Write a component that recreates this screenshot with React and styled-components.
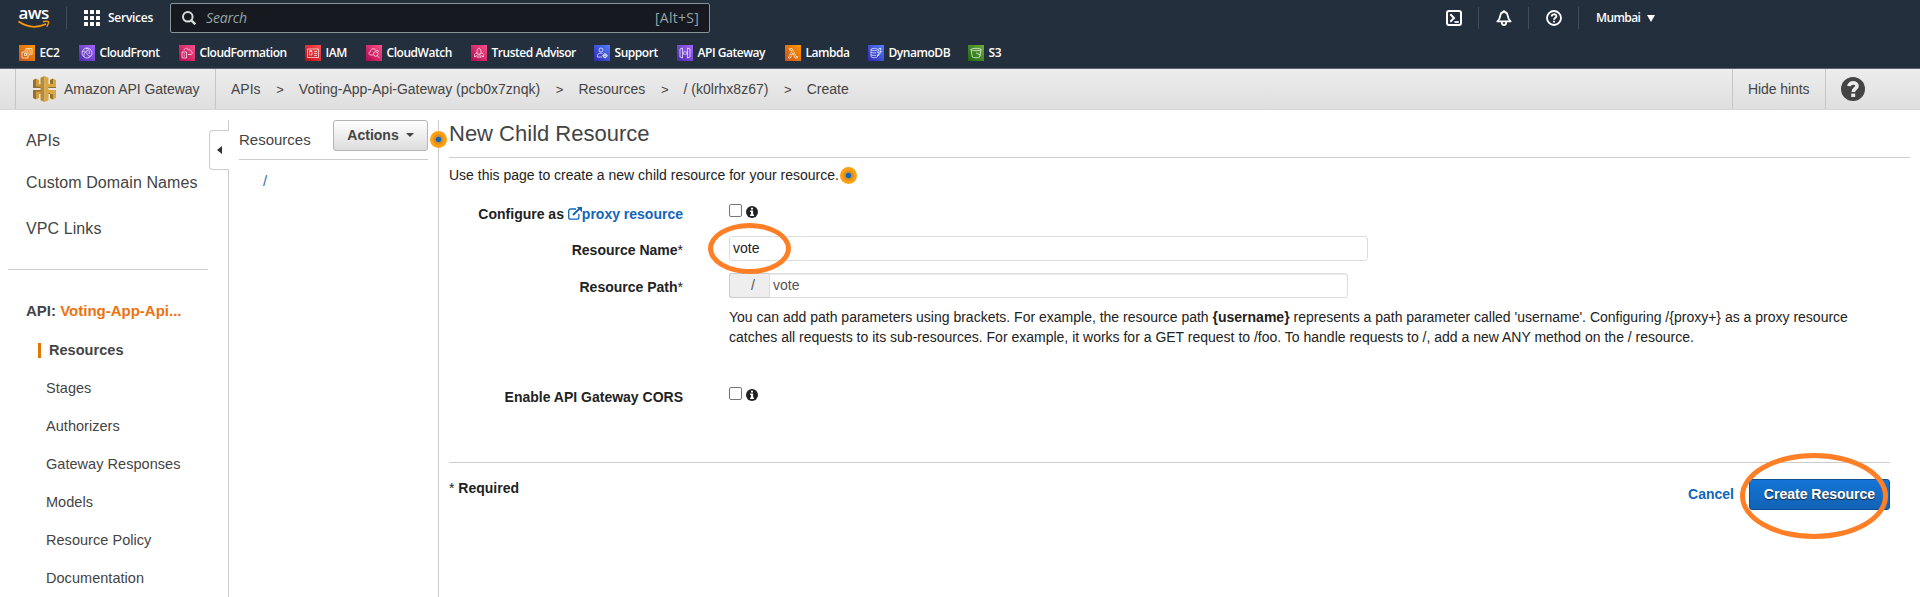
import React from 'react';
import styled, { createGlobalStyle, css } from 'styled-components';

const GlobalStyle = createGlobalStyle`
  * { box-sizing: border-box; }
  body {
    margin: 0;
    background: #fff;
    color: #222;
    font: 14px/20px "Liberation Sans", Arial, sans-serif;
    overflow: hidden;
  }
`;

const Page = styled.div`
  display: flex;
  flex-direction: column;
  height: 597px;
`;

/* ---------- Global navigation ---------- */

const Header = styled.header`
  height: 69px;
  flex: none;
  background: #242f3e;
  border-bottom: 1px solid #5a6471;
  color: #fff;
  font-family: "Open Sans", sans-serif;
  font-weight: 600;
  font-size: 12px;
`;

const TopBar = styled.div`
  display: flex;
  align-items: center;
  height: 36px;
`;

const Divider = styled.span`
  width: 1px;
  height: 22px;
  background: #414d5c;
`;

const Logo = styled.div`
  width: 66px;
  height: 36px;
  padding-left: 18px;
`;

const ServicesButton = styled.div`
  display: flex;
  align-items: center;
  gap: 8px;
  width: 103px;
  padding-left: 17px;
  letter-spacing: -0.27px;
`;

const SearchBox = styled.div`
  display: flex;
  align-items: center;
  width: 540px;
  height: 30px;
  padding: 0 10px 0 11px;
  border: 1px solid #879596;
  border-radius: 2px;
  background: #16191f;
  color: #95a5a6;
  font-weight: 400;
  font-size: 14px;

  em { flex: 1; margin-left: 10px; letter-spacing: -0.15px; }
  span { letter-spacing: 0.25px; }
`;

const Tools = styled.div`
  display: flex;
  align-items: center;
  margin-left: 736px;
`;

const Tool = styled.span`
  display: flex;
  justify-content: center;
  width: 49px;

  &:first-child { width: 32px; justify-content: flex-start; }
`;

const Region = styled.span`
  display: flex;
  align-items: center;
  gap: 7px;
  padding-left: 17px;
  letter-spacing: -0.6px;
`;

const Favorites = styled.nav`
  display: flex;
  height: 32px;
  padding: 9px 0 0 19px;
`;

const Favorite = styled.a`
  display: flex;
  gap: 4.5px;
  width: ${(p) => p.$width}px;
  line-height: 16px;
  letter-spacing: -0.46px;
  white-space: nowrap;
`;

/* ---------- Breadcrumb bar ---------- */

const SubHeader = styled.div`
  display: flex;
  flex: none;
  align-items: stretch;
  height: 41px;
  padding-left: 15px;
  border-bottom: 1px solid #d5d5d5;
  background: linear-gradient(#ededed, #dfdfdf);
  color: #444;
  line-height: 40px;
`;

const Brand = styled.div`
  display: flex;
  align-items: center;
  gap: 8px;
  width: 201px;
  padding-left: 17px;
  border: solid #c6c6c6;
  border-width: 0 1px;
  letter-spacing: -0.04px;
`;

const Crumbs = styled.div`
  display: flex;
  flex: 1;
  padding-left: 15px;
`;

const Crumb = styled.span`
  &:not(:last-child)::after {
    content: ">";
    margin: 0 15px 0 15.7px;
    font-size: 13px;
  }
`;

const HintToggle = styled.div`
  width: 94px;
  padding-left: 15px;
  border: solid #c6c6c6;
  border-width: 0 1px;
  letter-spacing: -0.08px;
`;

const HelpSlot = styled.div`
  display: flex;
  align-items: center;
  width: 94px;
  padding-left: 15px;
`;

/* ---------- Columns ---------- */

const Body = styled.div`
  display: flex;
  flex: 1;
  min-height: 0;
`;

const SideNav = styled.nav`
  position: relative;
  width: 229px;
  margin-top: 10px;
  padding-top: 11px;
  border-right: 1px solid #ccc;
  color: #444;
`;

const CollapseTab = styled.div`
  position: absolute;
  top: 10px;
  right: -1px;
  display: flex;
  align-items: center;
  justify-content: center;
  width: 20px;
  height: 40px;
  border: 1px solid #ccc;
  border-right: 0;
  border-radius: 4px 0 0 4px;
  background: #fff;
`;

const SideLink = styled.a`
  display: block;
  height: ${(p) => p.$height}px;
  padding-left: 26px;
  font-size: 16px;
  letter-spacing: 0.09px;
`;

const SideRule = styled.div`
  width: 200px;
  margin: 0 0 31px 8px;
  border-top: 1px solid #ccc;
`;

const ApiTitle = styled.div`
  height: 42px;
  padding-left: 26px;
  font-size: 15px;
  font-weight: 700;

  span { color: #ec7211; }
`;

const SubLink = styled.a`
  display: block;
  height: 15px;
  margin: 0 0 23px 38px;
  padding-left: 8px;
  font-size: 14.5px;
  line-height: 15px;
  letter-spacing: 0.04px;
  ${(p) => p.$active && css`
    border-left: 3px solid #e07700;
    font-weight: 700;
  `}
`;

const TreePane = styled.section`
  position: relative;
  width: 210px;
  margin-top: 10px;
  padding: 0 10px;
  border-right: 1px solid #ccc;
  color: #444;
`;

const TreeHead = styled.div`
  display: flex;
  justify-content: space-between;
  height: 40px;
  border-bottom: 1px solid #ccc;
  font-size: 15px;
  line-height: 39px;
`;

const ActionsButton = styled.button`
  display: flex;
  align-items: center;
  justify-content: center;
  gap: 7px;
  width: 95px;
  height: 31px;
  padding: 0 0 1px;
  border: 1px solid #b4b4b4;
  border-radius: 3px;
  background: linear-gradient(#fff, #dcdcdc);
  color: #444;
  font: 700 14px "Liberation Sans", Arial, sans-serif;
`;

const TreeRoot = styled.a`
  display: block;
  padding: 11px 0 0 24px;
  color: #3f6d9e;
  font-size: 15px;
`;

const HintDot = styled.span`
  display: inline-block;
  width: 17px;
  height: 17px;
  border-radius: 50%;
  background: radial-gradient(circle, #1166bb 0 2.4px, #dd8f1c 3.2px 4.8px, #ff9f14 5.6px);
  ${(p) => p.$floating && css`
    position: absolute;
    top: 11px;
    right: -9px;
  `}
`;

const Main = styled.main`
  flex: 1;
  padding: 11px 10px 0;
`;

const Title = styled.h1`
  margin: 0 0 7px;
  padding-bottom: 11px;
  border-bottom: 1px solid #ccc;
  color: #444;
  font-size: 22px;
  font-weight: 400;
  line-height: 25px;
`;

const Intro = styled.p`
  display: flex;
  align-items: center;
  gap: 1px;
  height: 20px;
  margin: 0 0 19px;
`;

const FormRow = styled.div`
  display: grid;
  grid-template-columns: 234px 1fr;
  column-gap: 46px;
  min-height: ${(p) => p.$height}px;
`;

const Label = styled.label`
  padding-top: ${(p) => (p.$field ? 4 : 0)}px;
  font-weight: 700;
  text-align: right;
  white-space: nowrap;

  span { font-weight: 400; }
  a { color: #1166bb; }
  svg { vertical-align: -1px; }
`;

const CheckGroup = styled.div`
  display: flex;
  align-items: flex-start;
  gap: 4px;

  svg { margin-top: 2px; }
`;

const Checkbox = styled.input`
  appearance: none;
  width: 13px;
  height: 13px;
  margin: 0;
  border: 1px solid #767676;
  border-radius: 2px;
  background: #fff;
`;

const NameInput = styled.div`
  position: relative;
  width: 639px;
  height: 25px;
  padding-left: 3px;
  border: 1px solid #ddd;
  border-radius: 3px;
  line-height: 22px;
`;

const PathInput = styled.div`
  display: flex;
  width: 619px;
  height: 25px;
  border: 1px solid #ddd;
  border-radius: 3px;
  box-shadow: inset 0 1px 1px #e8e8e8;
  color: #555;
  line-height: 22px;
`;

const PathPrefix = styled.span`
  width: 41px;
  height: 25px;
  margin: -1px 3px 0 -1px;
  padding: 1px 0 0 21px;
  border: 1px solid #ccc;
  border-right-color: #ddd;
  border-radius: 3px 0 0 3px;
  background: #eee;
  line-height: 21px;
`;

const HelpText = styled.p`
  margin: 9px 0 0;
  white-space: nowrap;
`;

const Footer = styled.footer`
  display: flex;
  align-items: flex-start;
  width: 1441px;
  padding-top: 16px;
  border-top: 1px solid #ccc;
`;

const Required = styled.strong`
  flex: 1;
  margin-top: -1px;

  span { font-weight: 400; }
`;

const CancelLink = styled.a`
  margin: 5px 15px 0 0;
  color: #1166bb;
  font-weight: 700;
`;

const CreateButton = styled.button`
  position: relative;
  width: 141px;
  height: 31px;
  padding: 0 0 1px;
  border: 1px solid #0d4f92;
  border-radius: 3px;
  background: linear-gradient(#1375d6, #1163b5);
  color: #fff;
  font: 700 14px "Liberation Sans", Arial, sans-serif;
  text-shadow: 0 1px 1px #222;
  white-space: nowrap;
`;

/* Hand-drawn emphasis ring laid over the control it surrounds. */
const Ring = styled.span`
  position: absolute;
  z-index: 2;
  left: ${(p) => p.$x}px;
  top: ${(p) => p.$y}px;
  width: ${(p) => p.$w}px;
  height: ${(p) => p.$h}px;
  border: 5px solid #ff7f27;
  border-radius: 50%;
  pointer-events: none;
`;

/* ---------- Drawings ---------- */

const LogoText = styled.text`
  font: 600 17px "Open Sans", sans-serif;
  letter-spacing: -0.6px;
  fill: #fff;
`;

const AwsLogo = () => (
  <svg width="34" height="36" viewBox="0 0 34 36">
    <LogoText x="0.6" y="18.5">aws</LogoText>
    <path d="M0.5 21.6 Q14 30.6 28 24" fill="none" stroke="#f90" strokeWidth="1.8" />
    <path d="M25 21.8 q4.6 -1.2 5.4 -.2 q.6 1.2 -1.6 5" fill="none" stroke="#f90" strokeWidth="1.4" />
  </svg>
);

const GridIcon = () => (
  <svg width="16" height="16" fill="#fff">
    {[0, 6, 12].map((y) => [0, 6, 12].map((x) => <rect key={`${x}-${y}`} x={x} y={y} width="4" height="4" rx=".5" />))}
  </svg>
);

const SearchIcon = () => (
  <svg width="14" height="14" fill="none" stroke="#d5dbdb" strokeWidth="2">
    <circle cx="5.8" cy="5.8" r="4.8" />
    <path d="M9.3 9.3 13.3 13.3" strokeWidth="2.4" />
  </svg>
);

const ShellIcon = () => (
  <svg width="16" height="16" fill="none" stroke="#fff" strokeWidth="2">
    <rect x="1" y="1" width="14" height="14" rx="2" />
    <path d="M4.3 4.3 8 8 4.3 11.7" />
    <path d="M8.5 12h4.3" strokeWidth="1.8" />
  </svg>
);

const BellIcon = () => (
  <svg width="16" height="16" fill="none" stroke="#fff" strokeWidth="1.8" strokeLinejoin="round">
    <path d="M1.4 11.4C3.6 9.5 3.9 8.5 4.3 5.6 4.7 3.3 6 2 8 2s3.3 1.3 3.7 3.6c.4 2.9.7 3.9 2.9 5.8z" />
    <path d="M8 .2V2M5.8 12v.8a2.2 2.2 0 0 0 4.4 0V12" />
  </svg>
);

const HelpIcon = () => (
  <svg width="16" height="16" fill="none" stroke="#fff" strokeWidth="1.8">
    <circle cx="8" cy="8" r="7" />
    <path d="M5.7 6.4C5.7 3.6 10.4 3.6 10.4 6.2 10.4 7.8 8 7.8 8 9.8M8 10.8v1.8" />
  </svg>
);

const CaretDown = ({ w, h, color }) => (
  <svg width={w} height={h} fill={color}><path d={`M0 0H${w}L${w / 2} ${h}Z`} /></svg>
);

const CaretLeft = () => (
  <svg width="5" height="8" fill="#333"><path d="M5 0V8L0 4Z" /></svg>
);

const GatewayMark = () => (
  <svg width="23" height="26" viewBox="0 0 23 26">
    <path d="M0 4 3 2.5V8H8V12H0ZM0 14H8V18H3V23.5L0 22Z" fill="#94702c" />
    <path d="M3 2.5 6 4V8H8V10.5H3ZM3 15.5H8V18H6V22L3 23.5Z" fill="#cf9d3f" />
    <path d="M17 4 20 2.5 23 4V12H15V8H17ZM15 14H23V22L20 23.5 17 22V18H15Z" fill="#d9a741" />
    <path d="M17 4 20 2.5V8H17ZM17 18H20V23.5L17 22ZM15 11H23V12H15ZM15 17H17V18H15Z" fill="#94702c" />
    <path d="M7.5 1.8 11.5 0V26L7.5 24.2Z" fill="#b78a35" />
    <path d="M11.5 0 15.5 1.8V24.2L11.5 26Z" fill="#dba83f" />
  </svg>
);

const BigHelp = () => (
  <svg width="24" height="24">
    <circle cx="12" cy="12" r="12" fill="#444" />
    <path d="M8 9.2C8.2 4.7 16.2 4.8 16 9 16 11.7 12.4 11.5 12.3 15" fill="none" stroke="#ececec" strokeWidth="3.7" />
    <rect x="10.2" y="16.6" width="4" height="3.4" fill="#ececec" />
  </svg>
);

const InfoIcon = () => (
  <svg width="12" height="12">
    <circle cx="6" cy="6" r="6" fill="#222" />
    <path d="M5 1.8H7V3.5H5ZM4.1 4.6H7.1V8.6H8V9.9H4.1V8.6H5V5.9H4.1Z" fill="#fff" />
  </svg>
);

const ExternalIcon = () => (
  <svg width="14" height="13" fill="none" stroke="#1166bb">
    <path d="M8 2H2.6A1.9 1.9 0 0 0 .7 3.9v6.4a1.9 1.9 0 0 0 1.9 1.9H9a1.9 1.9 0 0 0 1.9-1.9V7" strokeWidth="1.3" />
    <path d="M5 8 11.5 1.6" strokeWidth="2" />
    <path d="M8.8 0H14V5.2Z" fill="#1166bb" stroke="none" />
  </svg>
);

const tileColors = {
  orange: ['#c8511b', '#f90'],
  purple: ['#4d27a8', '#a166ff'],
  pink: ['#b0084d', '#ff4f8b'],
  red: ['#bd0816', '#ff5252'],
  blue: ['#2e27ad', '#527fff'],
  green: ['#1b660f', '#6cae3e'],
};

const glyphs = {
  ec2: <path d="M3 7H9V13H3ZM6 6V5H11V10H10M6.5 3.5H13V9.5H12M5.5 8.5H7.5V10.5H5.5Z" />,
  cloudfront: <><circle cx="8" cy="8" r="5" /><path d="M3.3 7C6 5 7 7 8 9S11 12 12 10.5M7 3.3C10 4 11 6 10 9M5 12C4.5 9 6 6 9 5.5" /></>,
  cloudformation: <path d="M3 7H7.5V13H3ZM4.5 9H6M4.5 11H6M5 5.5C5 3 8.5 2.5 9.5 5 11 4 12 5 12 6.5 14 7 13.5 9.5 12 9.5H9" />,
  iam: <path d="M2.5 4H13.5V12.5H2.5ZM4.5 6.5H7V10H4.5ZM9 6.5H12M9 8.5H12M9 10.5H12M4.5 5.5H7" />,
  cloudwatch: <><path d="M7 10H5C2.3 10 2.3 7 4.5 6.5 4.7 3 9 3 9.8 5.3 12 5 12.5 6 12.5 7" /><circle cx="9.7" cy="9" r="2.3" /><path d="M11.3 10.7 13.5 13" /></>,
  advisor: <path d="M8 3C10 4 10 6 10 9H6C6 6 6 4 8 3ZM6 7 3.5 9.5V12L6 10.5M10 7 12.5 9.5V12L10 10.5M8 9V13M6.3 10.5V13M9.7 10.5V13" />,
  support: <><circle cx="7" cy="5" r="2" /><path d="M3.3 12C3 9 5 8 7 8L8.5 8.5M3.3 12H8" /><circle cx="11" cy="10.7" r="1.9" /><path d="M11 8V13.4M8.3 10.7H13.7" /></>,
  apigateway: <path d="M3 4 5.5 3V13L3 12ZM13 4 10.5 3V13L13 12ZM7.3 6 6.5 8 7.3 10M8.7 6 9.5 8 8.7 10" />,
  lambda: <path d="M4.5 3.5H7L11 11.5H12.5V13H10L7.7 8 5.5 13H3.3L6.8 6.3 6.2 5H4.5Z" />,
  dynamodb: <path d="M3 4.5C3 3 9.5 3 9.5 4.5S3 6 3 4.5V11.5C3 13 9.5 13 9.5 11.5V9.5M3 7C3.5 8 6 8.2 8 7.8M3 9.5C3.5 10.5 6 10.7 8 10.3M11 3.5 9.5 7.5H11.3L10 11 13.5 6.5H11.8L13 3.5Z" />,
  s3: <path d="M3 4.5C3 3 13 3 13 4.5S3 6 3 4.5L4.3 12C5 13 11 13 11.7 12L13 4.5M8 8 12.5 10" />,
};

const ServiceTile = ({ glyph, tone }) => (
  <svg width="16" height="16">
    <defs>
      <linearGradient id={`tile-${glyph}`} x1="0" y1="1" x2="1" y2="0">
        <stop stopColor={tileColors[tone][0]} />
        <stop offset="1" stopColor={tileColors[tone][1]} />
      </linearGradient>
    </defs>
    <rect width="16" height="16" fill={`url(#tile-${glyph})`} />
    <g fill="none" stroke="#fff" strokeOpacity=".85" strokeWidth=".8">{glyphs[glyph]}</g>
  </svg>
);

/* ---------- Data ---------- */

const favorites = [
  ['EC2', 'ec2', 'orange', 60],
  ['CloudFront', 'cloudfront', 'purple', 100],
  ['CloudFormation', 'cloudformation', 'pink', 126],
  ['IAM', 'iam', 'red', 61],
  ['CloudWatch', 'cloudwatch', 'pink', 105],
  ['Trusted Advisor', 'advisor', 'pink', 123],
  ['Support', 'support', 'blue', 83],
  ['API Gateway', 'apigateway', 'purple', 108],
  ['Lambda', 'lambda', 'orange', 83],
  ['DynamoDB', 'dynamodb', 'blue', 100],
  ['S3', 's3', 'green', 60],
];

const crumbs = ['APIs', 'Voting-App-Api-Gateway (pcb0x7znqk)', 'Resources', '/ (k0lrhx8z67)', 'Create'];

const apiLinks = ['Resources', 'Stages', 'Authorizers', 'Gateway Responses', 'Models', 'Resource Policy', 'Documentation'];

export default function App() {
  return (
    <Page>
      <GlobalStyle />
      <Header>
        <TopBar>
          <Logo><AwsLogo /></Logo>
          <Divider />
          <ServicesButton><GridIcon />Services</ServicesButton>
          <SearchBox><SearchIcon /><em>Search</em><span>[Alt+S]</span></SearchBox>
          <Tools>
            <Tool><ShellIcon /></Tool>
            <Divider />
            <Tool><BellIcon /></Tool>
            <Divider />
            <Tool><HelpIcon /></Tool>
            <Divider />
            <Region>Mumbai<CaretDown w={8} h={7} color="#fff" /></Region>
          </Tools>
        </TopBar>
        <Favorites>
          {favorites.map(([name, glyph, tone, width]) => (
            <Favorite key={name} $width={width}><ServiceTile glyph={glyph} tone={tone} />{name}</Favorite>
          ))}
        </Favorites>
      </Header>

      <SubHeader>
        <Brand><GatewayMark />Amazon API Gateway</Brand>
        <Crumbs>{crumbs.map((c) => <Crumb key={c}>{c}</Crumb>)}</Crumbs>
        <HintToggle>Hide hints</HintToggle>
        <HelpSlot><BigHelp /></HelpSlot>
      </SubHeader>

      <Body>
        <SideNav>
          <SideLink $height={42}>APIs</SideLink>
          <SideLink $height={46}>Custom Domain Names</SideLink>
          <SideLink $height={50}>VPC Links</SideLink>
          <SideRule />
          <ApiTitle>API: <span>Voting-App-Api...</span></ApiTitle>
          {apiLinks.map((name) => <SubLink key={name} $active={name === 'Resources'}>{name}</SubLink>)}
          <CollapseTab><CaretLeft /></CollapseTab>
        </SideNav>

        <TreePane>
          <TreeHead>
            Resources
            <ActionsButton>Actions<CaretDown w={8} h={4} color="#444" /></ActionsButton>
          </TreeHead>
          <TreeRoot>/</TreeRoot>
          <HintDot $floating />
        </TreePane>

        <Main>
          <Title>New Child Resource</Title>
          <Intro>Use this page to create a new child resource for your resource.<HintDot /></Intro>

          <FormRow $height={32}>
            <Label>Configure as <a><ExternalIcon />proxy resource</a></Label>
            <CheckGroup><Checkbox type="checkbox" /><InfoIcon /></CheckGroup>
          </FormRow>
          <FormRow $height={37}>
            <Label $field>Resource Name<span>*</span></Label>
            <NameInput>vote<Ring $x={-22} $y={-14} $w={83} $h={51} /></NameInput>
          </FormRow>
          <FormRow $height={114}>
            <Label $field>Resource Path<span>*</span></Label>
            <div>
              <PathInput><PathPrefix>/</PathPrefix>vote</PathInput>
              <HelpText>
                You can add path parameters using brackets. For example, the resource path <b>{'{username}'}</b> represents a path parameter called 'username'. Configuring /{'{proxy+}'} as a proxy resource
                <br />
                catches all requests to its sub-resources. For example, it works for a GET request to /foo. To handle requests to /, add a new ANY method on the / resource.
              </HelpText>
            </div>
          </FormRow>
          <FormRow $height={75}>
            <Label>Enable API Gateway CORS</Label>
            <CheckGroup><Checkbox type="checkbox" /><InfoIcon /></CheckGroup>
          </FormRow>

          <Footer>
            <Required><span>*</span> Required</Required>
            <CancelLink>Cancel</CancelLink>
            <CreateButton>Create Resource<Ring $x={-10} $y={-27} $w={148} $h={86} /></CreateButton>
          </Footer>
        </Main>
      </Body>
    </Page>
  );
}
